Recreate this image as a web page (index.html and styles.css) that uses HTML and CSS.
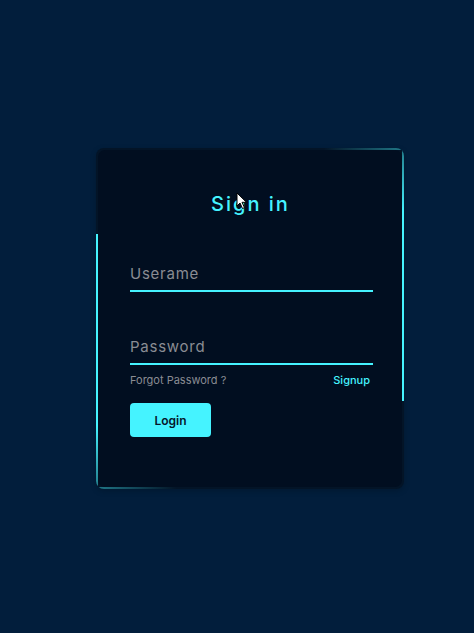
FILE: index.html
```html
<!DOCTYPE html>
<html lang="en">
<head>
<meta charset="utf-8">
<title>Sign in</title>
<link rel="stylesheet" href="styles.css">
</head>
<body>
  <div class="card">
    <form class="form">
      <h2 class="title">Sign in</h2>
      <div class="field field-1"><span class="label">Userame</span></div>
      <div class="field field-2"><span class="label">Password</span></div>
      <div class="links">
        <a class="forgot" href="#">Forgot Password ?</a>
        <a class="signup" href="#">Signup</a>
      </div>
      <button class="btn" type="button">Login</button>
    </form>
  </div>
  <svg class="cursor" width="12" height="18" viewBox="0 0 12 18" aria-hidden="true">
    <path d="M1 1 L1 14 L4 11 L6.5 16.5 L8.5 15.6 L6 10.3 L10.5 10.3 Z" fill="#fff" stroke="#000" stroke-width="1" stroke-linejoin="round"/>
  </svg>
</body>
</html>
```

FILE: styles.css
```css
html, body {
  margin: 0;
  padding: 0;
}
body {
  background: #021e3c;
  min-height: 633px;
  font-family: Inter, "Liberation Sans", sans-serif;
  position: relative;
  overflow: hidden;
}
.card {
  position: relative;
  margin: 148px 0 0 96px;
  width: 308px;
  height: 341px;
  border-radius: 8px;
  overflow: hidden;
  background: #031427;
  box-shadow: 0 2px 6px rgba(0, 0, 0, 0.2);
}
.card::before,
.card::after {
  content: "";
  position: absolute;
  width: 80px;
  height: 253px;
}
.card::before {
  top: 0;
  right: 0;
  background:
    linear-gradient(to bottom, rgba(69, 243, 255, 0.45), #45f3ff 25%, #45f3ff) right top / 2px 100% no-repeat,
    linear-gradient(to right, rgba(69, 243, 255, 0), rgba(69, 243, 255, 0.45)) right top / 100% 2px no-repeat;
}
.card::after {
  bottom: 0;
  left: 0;
  height: 255px;
  background:
    linear-gradient(to top, rgba(69, 243, 255, 0.45), #45f3ff 25%, #45f3ff) left top / 2px 100% no-repeat,
    linear-gradient(to left, rgba(69, 243, 255, 0), rgba(69, 243, 255, 0.45)) left bottom / 100% 2px no-repeat;
}
.form {
  position: absolute;
  inset: 2px;
  z-index: 1;
  background: #010e20;
  border-radius: 7px;
  padding: 40px 29px 0 32px;
  display: flex;
  flex-direction: column;
  align-items: stretch;
}
.title {
  margin: 0;
  font-size: 20px;
  line-height: 28px;
  font-weight: 500;
  color: #45f3ff;
  text-align: center;
  letter-spacing: 0.1em;
  padding-right: 0.1em;
}
.field {
  padding-bottom: 6px;
  border-bottom: 2px solid #45f3ff;
}
.field-1 {
  margin-top: 46px;
}
.field-2 {
  margin-top: 45px;
}
.label {
  display: block;
  font-size: 15px;
  line-height: 20px;
  color: #8a8c93;
  letter-spacing: 0.05em;
}
.links {
  margin-top: 8px;
  display: flex;
  justify-content: space-between;
  padding-right: 3px;
  font-size: 11px;
  line-height: 14px;
}
.links a {
  text-decoration: none;
}
.forgot {
  color: #8a8c93;
}
.signup {
  color: #45f3ff;
  font-weight: 500;
}
.btn {
  margin-top: 16px;
  align-self: flex-start;
  width: 81px;
  height: 34px;
  border: none;
  border-radius: 4px;
  background: #45f3ff;
  color: #06162a;
  font-family: Inter, "Liberation Sans", sans-serif;
  font-size: 12px;
  font-weight: 600;
  cursor: pointer;
}
.cursor {
  position: absolute;
  left: 236px;
  top: 192px;
  z-index: 5;
}
```
